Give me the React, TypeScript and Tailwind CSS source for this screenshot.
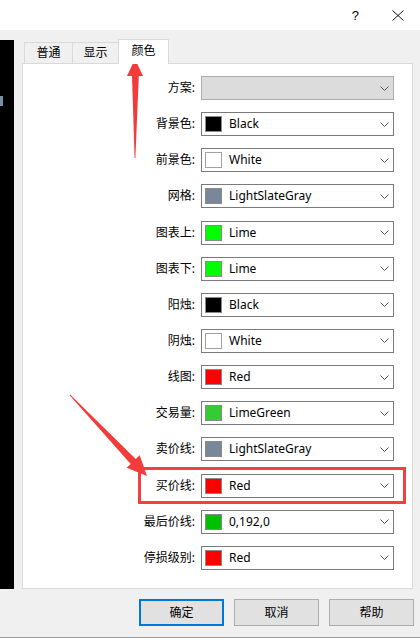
import React from "react";

type Row = { label: string; color?: string; text?: string; disabled?: boolean };

const rows: Row[] = [
  { label: "方案:", disabled: true },
  { label: "背景色:", color: "#000000", text: "Black" },
  { label: "前景色:", color: "#ffffff", text: "White" },
  { label: "网格:", color: "#778899", text: "LightSlateGray" },
  { label: "图表上:", color: "#00ff00", text: "Lime" },
  { label: "图表下:", color: "#00ff00", text: "Lime" },
  { label: "阳烛:", color: "#000000", text: "Black" },
  { label: "阴烛:", color: "#ffffff", text: "White" },
  { label: "线图:", color: "#ff0000", text: "Red" },
  { label: "交易量:", color: "#32cd32", text: "LimeGreen" },
  { label: "卖价线:", color: "#778899", text: "LightSlateGray" },
  { label: "买价线:", color: "#ff0000", text: "Red" },
  { label: "最后价线:", color: "#00c000", text: "0,192,0" },
  { label: "停损级别:", color: "#ff0000", text: "Red" },
];

function Chevron() {
  return (
    <svg width="9" height="5" viewBox="0 0 9 5" className="shrink-0">
      <polyline points="0.5,0.5 4.5,4.5 8.5,0.5" fill="none" stroke="#555" strokeWidth="1" />
    </svg>
  );
}

function Select({ row }: { row: Row }) {
  if (row.disabled) {
    return (
      <div className="w-[193px] h-[24px] border border-[#adadad] bg-[#dcdcdc] flex items-center justify-end pr-[4px]">
        <Chevron />
      </div>
    );
  }
  return (
    <div className="w-[193px] h-[24px] border border-[#7a7a7a] bg-white flex items-center pl-[3px] pr-[4px]">
      <div
        className={
          "w-[17px] h-[16px] shrink-0 border " +
          (row.color === "#ffffff" ? "border-[#a0a0a0]" : "border-[#8a8a8a]")
        }
        style={{ backgroundColor: row.color }}
      />
      <span className="ml-[7px] flex-1 text-[12px] leading-none text-black">{row.text}</span>
      <Chevron />
    </div>
  );
}

export default function App() {
  return (
    <div
      className="relative w-[420px] h-[638px] bg-[#f0f0f0] overflow-hidden flex flex-col border-b border-[#9a9a9a]"
      style={{ fontFamily: '"Noto Sans", "Noto Sans CJK SC", sans-serif' }}
    >
      {/* title bar */}
      <div className="h-[30px] bg-white flex items-center justify-end shrink-0">
        <span className="text-[13px] text-black mr-[33px] leading-none" style={{ fontFamily: '"Liberation Sans", sans-serif' }}>
          ?
        </span>
        <svg width="12" height="11" viewBox="0 0 12 11" className="mr-[16px]">
          <line x1="0.5" y1="0.5" x2="11.5" y2="10.5" stroke="#111" strokeWidth="1" />
          <line x1="11.5" y1="0.5" x2="0.5" y2="10.5" stroke="#111" strokeWidth="1" />
        </svg>
      </div>

      {/* main */}
      <div className="flex shrink-0">
        <div className="w-[14px] h-[549px] mt-[10px] bg-black relative">
          <div className="absolute left-0 top-[56px] w-[3px] h-[10px] bg-[#7b8fa3]" />
        </div>
        <div className="ml-[8px] mt-[9px] w-[391px] flex flex-col">
          {/* tabs */}
          <div className="h-[24px] flex items-end pl-[2px] relative z-10">
            <div className="w-[48px] h-[21px] border-l border-t border-[#d9d9d9] flex items-center justify-center text-[12px] text-black pb-[1px]">
              普通
            </div>
            <div className="w-[46px] h-[21px] border-l border-t border-[#d9d9d9] flex items-center justify-center text-[12px] text-black pb-[1px]">
              显示
            </div>
            <div className="w-[51px] h-[25px] -mb-[1px] border-l border-t border-r border-[#d9d9d9] bg-white flex items-center justify-center text-[12px] text-black pb-[3px]">
              颜色
            </div>
          </div>
          {/* panel */}
          <div className="h-[526px] border border-[#d9d9d9] bg-white pt-[12px] flex flex-col gap-[12.15px]">
            {rows.map((r, i) => (
              <div key={i} className="flex items-center h-[24px]">
                <div className="w-[172px] text-right text-[12px] text-black leading-none">{r.label}</div>
                <div className="ml-[6px]">
                  <Select row={r} />
                </div>
              </div>
            ))}
          </div>
        </div>
      </div>

      {/* buttons */}
      <div className="flex justify-end gap-[10px] pr-[6px] mt-[10px]">
        <button className="w-[85px] h-[27px] border-2 border-[#0078d7] bg-[#e1e1e1] text-[12px] text-black">确定</button>
        <button className="w-[85px] h-[27px] border border-[#adadad] bg-[#e1e1e1] text-[12px] text-black">取消</button>
        <button className="w-[85px] h-[27px] border border-[#adadad] bg-[#e1e1e1] text-[12px] text-black">帮助</button>
      </div>

      {/* annotation: highlight box */}
      <div className="absolute left-[138px] top-[467px] w-[268px] h-[37px] border-[3px] border-[#f24040] pointer-events-none" />

      {/* annotation arrows */}
      <svg className="absolute left-0 top-0 pointer-events-none" width="420" height="638" viewBox="0 0 420 638">
        <polygon
          points="134.6,158 132,76 127,76 135,59 143,76 138.8,76 135.4,158"
          fill="#f23c3c"
        />
        <polygon
          points="69.6,395.3 130.7,463.9 126.7,467.7 147,476 139.7,455.3 135.7,459.1 70.4,394.7"
          fill="#f23c3c"
        />
      </svg>
    </div>
  );
}
